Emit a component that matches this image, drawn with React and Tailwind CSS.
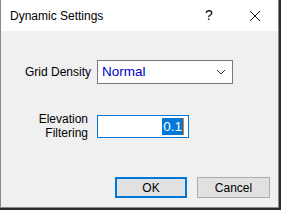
export default function App() {
  return (
    <div className="h-[210px] w-[281px] bg-[#2a2d2a]" style={{ fontFamily: '"Liberation Sans", Arial, sans-serif' }}>
      <div className="flex h-[208px] w-[279px] flex-col border-x border-b border-[#8a8a8a] bg-[#f0f0f0]">
        <div className="flex h-[31px] items-center bg-white text-[12px] text-black">
          <span className="ml-[9px] flex-1">Dynamic Settings</span>
          <span className="w-[46px] text-center text-[14px]">?</span>
          <span className="flex w-[46px] justify-center">
            <svg width="12" height="12" viewBox="0 0 12 12" fill="none" stroke="#111" strokeWidth="1">
              <path d="M1 1 L11 11 M11 1 L1 11" />
            </svg>
          </span>
        </div>
        <div className="flex flex-1 flex-col pt-[29px]">
          <div className="flex items-center">
            <span className="w-[90px] text-right text-[12px] text-black">Grid Density</span>
            <div className="ml-[6px] flex h-[24px] w-[136px] items-center border border-[#7a7a7a] bg-white pl-[4px] pr-[6px]">
              <span className="flex-1 text-[13.5px] text-[#0000c8]">Normal</span>
              <svg width="10" height="6" viewBox="0 0 10 6" fill="none" stroke="#333" strokeWidth="1">
                <path d="M1 1 L5 5 L9 1" />
              </svg>
            </div>
          </div>
          <div className="mt-[28px] flex items-center">
            <span className="w-[90px] pr-[3px] text-right text-[12px] leading-[14px] text-black">
              Elevation
              <br />
              Filtering
            </span>
            <div className="ml-[6px] flex h-[23px] w-[92px] items-center justify-end border border-[#0078d7] bg-white pr-[4px]">
              <span className="bg-[#0078d7] px-[1px] text-[13.5px] leading-[17px] text-white">0.1</span>
              <span className="h-[17px] w-[1px] bg-[#ff7a00]" />
            </div>
          </div>
          <div className="mt-auto mb-[9px] flex justify-end gap-[10px] pr-[8px] text-[12px] text-black">
            <button className="h-[21px] w-[72px] border-2 border-[#0078d7] bg-[#e1e1e1]">OK</button>
            <button className="h-[21px] w-[73px] border border-[#adadad] bg-[#e1e1e1]">Cancel</button>
          </div>
        </div>
      </div>
    </div>
  );
}
